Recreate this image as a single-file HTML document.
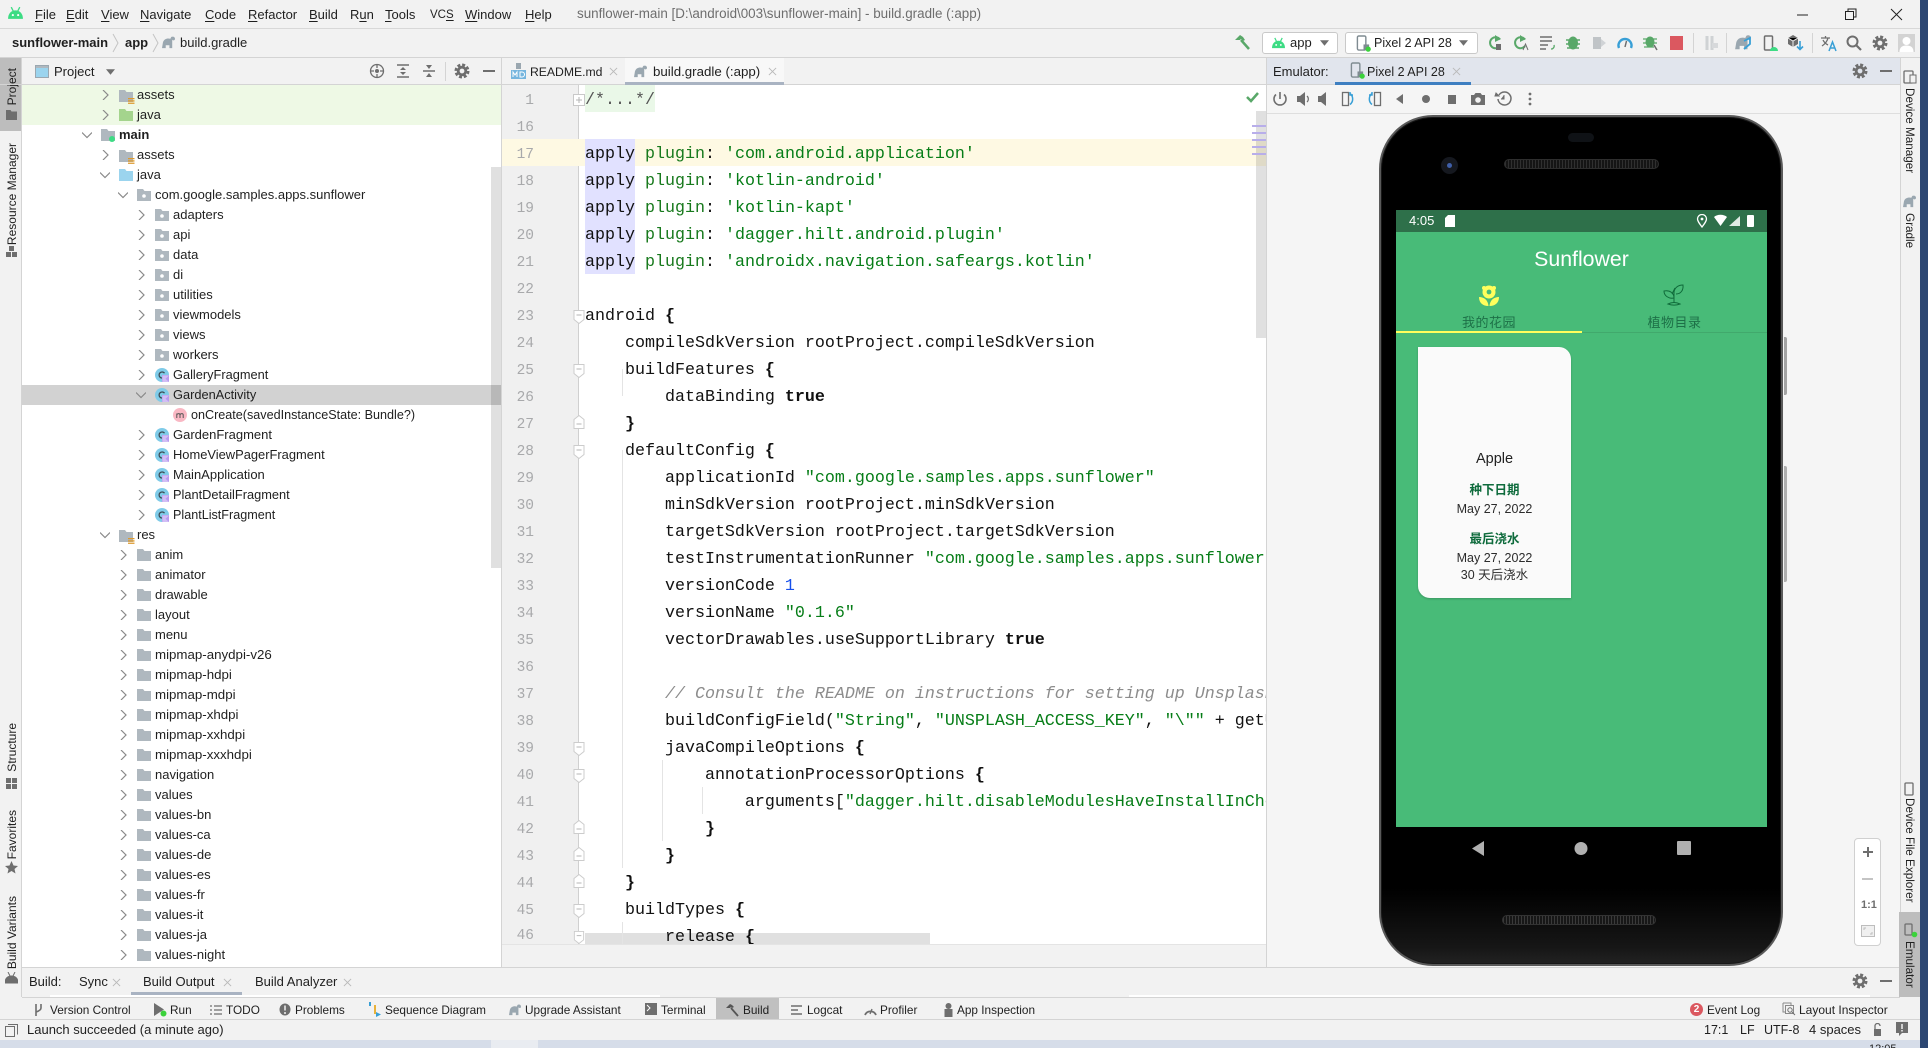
<!DOCTYPE html>
<html><head><meta charset="utf-8"><title>sunflower-main - build.gradle</title>
<style>
html,body{margin:0;padding:0;width:1928px;height:1048px;overflow:hidden;background:#f2f2f2}
body{position:relative;font-family:"Liberation Sans","Noto Sans CJK SC",sans-serif;font-size:13px;color:#1f1f1f}
div,svg,u{box-sizing:border-box}
.a,.t,svg.i{position:absolute}
.t{white-space:nowrap;line-height:20px;height:20px}
.b{font-weight:bold}
.g{color:#8a8a8a}
.bb{font-size:11.8px}
.mm{font-size:13.3px}
.vl,.vr{position:absolute;white-space:nowrap;line-height:18px;width:18px;writing-mode:vertical-rl}
.vl{left:3px;font-size:12px;transform:rotate(180deg)}
.vr{left:1900px;font-size:11.7px}
u{text-decoration:underline;text-underline-offset:2px}
#tree .t{color:#1f1f1f}
.c{position:absolute;left:585px;margin-top:2px;white-space:pre;font-family:"Liberation Mono",monospace;font-size:16.67px;line-height:27px;height:27px;color:#111}
.n{position:absolute;width:40px;left:494px;margin-top:3px;text-align:right;font-family:"Liberation Mono",monospace;font-size:14.5px;line-height:27px;height:27px;color:#a8a9ab}
.s{color:#067d17}.p{color:#17791c}
.ph{position:absolute;font-family:"Liberation Sans","Noto Sans CJK SC",sans-serif;text-align:center;white-space:nowrap}
.ig{position:absolute;width:1px;background:#e4e4e4}
</style></head><body>
<svg width="0" height="0" style="position:absolute"><defs>
<symbol id="f" viewBox="0 0 14 12"><path d="M0 0h6l1.5 2H14v10H0z" fill="#afb8bf"/></symbol>
<symbol id="pk" viewBox="0 0 14 12"><path d="M0 0h6l1.5 2H14v10H0z" fill="#afb8bf"/><circle cx="7" cy="7" r="1.8" fill="#fff"/></symbol>
<symbol id="jv" viewBox="0 0 14 12"><path d="M0 0h6l1.5 2H14v10H0z" fill="#9bd4ee"/></symbol>
<symbol id="jg" viewBox="0 0 14 12"><path d="M0 0h6l1.5 2H14v10H0z" fill="#a4d48d"/></symbol>
<symbol id="rs" viewBox="0 0 16 16"><path d="M0 1h6l1.500 2H14v10H0z" fill="#afb8bf"/><path d="M9 9h6.500v1.300H9zM9 11.300h6.500v1.300H9zM9 13.600h6.500v1.300H9z" fill="#dd9a2e"/><rect x="8" y="7.500" width="8" height="8.500" fill="none"/></symbol>
<symbol id="cl" viewBox="0 0 14 14"><circle cx="7" cy="7" r="7" fill="#7fcbe8"/><path d="M9.500 5.200A3 3 0 1 0 9.500 8.800" fill="none" stroke="#3d4a52" stroke-width="1.300"/><path d="M7 7h7v7H7z" fill="#b99bf0"/><path d="M7.500 14V7.500H14L10.500 10.700 14 14z" fill="#fff" opacity=".35"/></symbol>
<symbol id="cr" viewBox="0 0 10 10"><path d="M3 0l5 5-5 5" fill="none" stroke="#8a8a8a" stroke-width="1.200"/></symbol>
<symbol id="cd" viewBox="0 0 10 10"><path d="M0 2.500l5 5 5-5" fill="none" stroke="#8a8a8a" stroke-width="1.200"/></symbol>
<symbol id="gr" viewBox="0 0 16 16"><circle cx="8" cy="8" r="3.800" fill="none" stroke="#6e6e6e" stroke-width="2.800"/><circle cx="8" cy="8" r="6.200" fill="none" stroke="#6e6e6e" stroke-width="2.600" stroke-dasharray="3 1.860"/></symbol>
<symbol id="ele" viewBox="0 0 16 14"><path d="M1 13l1-6C3 3 7 2 10 3l1-2c2-1 4 0 4 2s-2 2-3 1v9h-3v-3H5v3H2z" fill="#9aa7b0"/></symbol>
<symbol id="and" viewBox="0 0 16 14"><path d="M1 12C1 7 4 4 8 4s7 3 7 8z" fill="#3ddc84"/><path d="M4 1l2 4M12 1l-2 4" stroke="#3ddc84" stroke-width="1.300"/><circle cx="5.500" cy="8.500" r="1" fill="#fff"/><circle cx="10.500" cy="8.500" r="1" fill="#fff"/></symbol>
<symbol id="ph" viewBox="0 0 16 18"><rect x="1.500" y="1" width="9" height="15" rx="1.500" fill="none" stroke="#7f8b91" stroke-width="1.500"/><rect x="8" y="10" width="6" height="6" fill="#7f8b91"/><circle cx="13" cy="15" r="2.800" fill="#3bd23b"/></symbol>
<symbol id="x" viewBox="0 0 10 10"><path d="M1 1l8 8M9 1l-8 8" stroke="#b9b9b9" stroke-width="1"/></symbol>
<symbol id="tri" viewBox="0 0 10 6"><path d="M0 0h10L5 6z" fill="#6e6e6e"/></symbol>
<symbol id="pm" viewBox="0 0 12 12"><rect x=".5" y=".5" width="11" height="11" fill="#fff" stroke="#c9c9c9"/><path d="M3 6h6" stroke="#b5b5b5"/></symbol>
<symbol id="fe" viewBox="0 0 12 14"><path d="M1 .5h10v9L6 13.500 1 9.500z" fill="#fff" stroke="#cccccc"/><path d="M3.500 5h5" stroke="#b5b5b5"/></symbol>
<symbol id="fs" viewBox="0 0 12 14"><path d="M1 13.500h10v-9L6 .5 1 4.500z" fill="#fff" stroke="#cccccc"/><path d="M3.500 9h5" stroke="#b5b5b5"/></symbol>
</defs></svg>

<!-- desktop strips -->
<div class="a" style="left:1920px;top:0;width:8px;height:1048px;background:#2c4672"></div>
<div class="a" style="left:0;top:1040px;width:1920px;height:8px;background:#d6dde9"></div>
<div class="a" style="left:491px;top:1040px;width:47px;height:8px;background:#e9ecf1"></div>
<div class="a" style="left:1869px;top:1044px;height:4px;width:34px;overflow:hidden;font-size:11px;line-height:11px;color:#222">12:05</div>

<!-- title bar -->
<svg class="i" style="left:7px;top:6px" width="17" height="15"><use href="#and"/></svg>
<div class="t" style="left:35px;top:5px"><u>F</u>ile</div>
<div class="t" style="left:66px;top:5px"><u>E</u>dit</div>
<div class="t" style="left:101px;top:5px"><u>V</u>iew</div>
<div class="t" style="left:140px;top:5px"><u>N</u>avigate</div>
<div class="t" style="left:205px;top:5px"><u>C</u>ode</div>
<div class="t" style="left:248px;top:5px"><u>R</u>efactor</div>
<div class="t" style="left:309px;top:5px"><u>B</u>uild</div>
<div class="t" style="left:350px;top:5px">R<u>u</u>n</div>
<div class="t" style="left:385px;top:5px"><u>T</u>ools</div>
<div class="t" style="left:430px;top:5px;font-size:11.5px">VC<u>S</u></div>
<div class="t" style="left:465px;top:5px"><u>W</u>indow</div>
<div class="t" style="left:525px;top:5px"><u>H</u>elp</div>
<div class="t" style="left:577px;top:4px;color:#6e6e6e;font-size:13.4px">sunflower-main [D:\android\003\sunflower-main] - build.gradle (:app)</div>
<svg class="i" style="left:1797px;top:8px" width="124" height="14"><path d="M0 7h11" stroke="#222" stroke-width="1"/><path d="M48.500 3.500h8v8h-8zM51 3.500V1h8v8h-2.500" fill="none" stroke="#222"/><path d="M94 1l11 11M105 1L94 12" stroke="#222"/></svg>
<div class="a" style="left:0;top:28px;width:1920px;height:1px;background:#d8d8d8"></div>

<!-- breadcrumb + toolbar -->
<div class="t b" style="left:12px;top:33px">sunflower-main</div>
<svg class="i" style="left:112px;top:33px" width="7" height="20"><path d="M1 1l5 9-5 9" fill="none" stroke="#c4c4c4"/></svg>
<div class="t b" style="left:125px;top:33px">app</div>
<svg class="i" style="left:152px;top:33px" width="7" height="20"><path d="M1 1l5 9-5 9" fill="none" stroke="#c4c4c4"/></svg>
<svg class="i" style="left:161px;top:36px" width="15" height="13"><use href="#ele"/></svg>
<div class="t" style="left:180px;top:33px">build.gradle</div>

<svg class="i" style="left:1234px;top:34px" width="17" height="17"><path d="M1 6l5-5 3 2 2 3-2 1-2-2-1 1z" fill="#59a869"/><path d="M7 6l8 9" stroke="#59a869" stroke-width="2.500"/></svg>
<div class="a" style="left:1262px;top:32px;width:76px;height:22px;background:#fff;border:1px solid #c9c9c9;border-radius:3px"></div>
<svg class="i" style="left:1271px;top:37px" width="15" height="13"><use href="#and"/></svg>
<div class="t" style="left:1290px;top:33px">app</div>
<svg class="i" style="left:1320px;top:40px" width="9" height="6"><use href="#tri"/></svg>
<div class="a" style="left:1345px;top:32px;width:133px;height:22px;background:#fff;border:1px solid #c9c9c9;border-radius:3px"></div>
<svg class="i" style="left:1356px;top:35px" width="15" height="17"><use href="#ph"/></svg>
<div class="t" style="left:1374px;top:33px;font-size:12.5px">Pixel 2 API 28</div>
<svg class="i" style="left:1459px;top:40px" width="9" height="6"><use href="#tri"/></svg>
<svg class="i" style="left:1487px;top:35px" width="200" height="16">
<path d="M13 4.500A5.500 5.500 0 1 0 13 11" fill="none" stroke="#59a869" stroke-width="2"/><path d="M8 0l6 4-6 3z" fill="#59a869"/><rect x="9" y="9" width="5" height="6" fill="#6e6e6e"/>
<path d="M38 4.500A5.500 5.500 0 1 0 38 11" fill="none" stroke="#59a869" stroke-width="2"/><path d="M33 0l6 4-6 3z" fill="#59a869"/><path d="M36 15l2.500-6 2.500 6" fill="none" stroke="#6e6e6e"/>
<path d="M53 2h12M53 6h12M53 10h8M53 14h6" stroke="#6e6e6e" stroke-width="1.600"/><path d="M67 10a3 3 0 0 1-3 4" fill="none" stroke="#59a869" stroke-width="1.300"/>
<ellipse cx="86" cy="8" rx="5" ry="6.500" fill="#59a869"/><path d="M79 5l14 0M79 9h14M80 13h12" stroke="#59a869" stroke-width="1.400"/>
<rect x="106" y="2" width="8" height="12" fill="#c0c4c7"/><path d="M114 4l5 4-5 4z" fill="#d0d3d6"/>
<path d="M132 13a6.500 6.500 0 1 1 12 0" fill="none" stroke="#389fd6" stroke-width="2.400"/><path d="M138 12l1.500-6" stroke="#6e6e6e" stroke-width="1.500"/>
<ellipse cx="163" cy="7" rx="4.500" ry="5.500" fill="#59a869"/><path d="M156 4h14M156 8h14M157 12h10" stroke="#59a869" stroke-width="1.300"/><path d="M167 10l3 5" stroke="#6e6e6e" stroke-width="1.500"/>
<rect x="183" y="1" width="13" height="14" fill="#db5860"/></svg>
<div class="a" style="left:1693px;top:33px;width:1px;height:20px;background:#d4d4d4"></div>
<svg class="i" style="left:1704px;top:35px" width="16" height="16"><path d="M3 1v14M8 1v14" stroke="#cfd2d4" stroke-width="3"/><path d="M8 8h6v5H8z" fill="#d7d9db"/></svg>
<div class="a" style="left:1726px;top:33px;width:1px;height:20px;background:#d4d4d4"></div>
<svg class="i" style="left:1734px;top:34px" width="18" height="17"><use href="#ele" /><path d="M10 7l6-3v6l-6 5" fill="none" stroke="#389fd6" stroke-width="1.800"/></svg>
<svg class="i" style="left:1763px;top:35px" width="16" height="17"><rect x="1.500" y="1" width="8" height="14" rx="1" fill="none" stroke="#6e6e6e" stroke-width="1.500"/><path d="M7 16a4 4 0 0 1 8 0z" fill="#3ddc84"/></svg>
<svg class="i" style="left:1787px;top:34px" width="17" height="18"><path d="M1 4l5-3 5 3v6l-5 3-5-3z" fill="#6e6e6e"/><path d="M6 7v6M1 4l5 3 5-3" stroke="#f2f2f2"/><path d="M13 7v8M10 12.500l3 3 3-3" fill="none" stroke="#389fd6" stroke-width="1.600"/></svg>
<div class="a" style="left:1812px;top:33px;width:1px;height:20px;background:#d4d4d4"></div>
<svg class="i" style="left:1820px;top:34px" width="17" height="18"><path d="M1 4h9M5.500 2v2M8 4c-1 4-3 6-6 8M3 6c1 2 3 4 5 5" fill="none" stroke="#6e6e6e" stroke-width="1.300"/><path d="M9 17l3.500-9 3.500 9M10.500 14h4" fill="none" stroke="#389fd6" stroke-width="1.500"/></svg>
<svg class="i" style="left:1846px;top:35px" width="16" height="16"><circle cx="6.500" cy="6.500" r="5" fill="none" stroke="#6e6e6e" stroke-width="2"/><path d="M10 10l5 5" stroke="#6e6e6e" stroke-width="2.200"/></svg>
<svg class="i" style="left:1872px;top:35px" width="16" height="16"><use href="#gr"/></svg>
<svg class="i" style="left:1898px;top:34px" width="17" height="18"><rect width="17" height="18" fill="#d3d3d3"/><circle cx="8.500" cy="7" r="4" fill="#fff"/><path d="M1.500 18c0-5 3-6.500 7-6.500s7 1.500 7 6.500z" fill="#fff"/></svg>
<div class="a" style="left:0;top:57px;width:1920px;height:1px;background:#d4d4d4"></div>

<!-- left strip -->
<div class="a" style="left:0;top:58px;width:21px;height:73px;background:#bdbdbd"></div>
<div class="a" style="left:21px;top:58px;width:1px;height:939px;background:#d4d4d4"></div>
<div class="vl" style="top:68px">Project</div>
<svg class="i" style="left:6px;top:110px" width="11" height="10"><path d="M0 0h4.500l1 1.500H11V10H0z" fill="#6e6e6e"/></svg>
<div class="vl" style="top:143px">Resource Manager</div>
<svg class="i" style="left:6px;top:246px" width="11" height="11"><path d="M3 0h5v5H3zM0 6h5v5H0zM6 6h5v5H6z" fill="#6e6e6e"/></svg>
<div class="vl" style="top:723px">Structure</div>
<svg class="i" style="left:6px;top:778px" width="11" height="11"><path d="M0 0h5v5H0zM6 0h5v5H6zM6 6h5v5H6zM0 6h5v5H0z" fill="#6e6e6e"/></svg>
<div class="vl" style="top:810px">Favorites</div>
<svg class="i" style="left:5px;top:861px" width="13" height="13"><path d="M6.500 0l2 4.500 4.500.5-3.500 3 1 4.500-4-2.500-4 2.500 1-4.500L0 5l4.500-.5z" fill="#6e6e6e"/></svg>
<div class="vl" style="top:896px">Build Variants</div>
<svg class="i" style="left:5px;top:972px" width="13" height="12"><path d="M0 11C0 6 3 4 6.500 4S13 6 13 11zM3 0l2 4M10 0L8 4" fill="#6e6e6e" stroke="#6e6e6e"/></svg>

<!-- project header -->
<svg class="i" style="left:35px;top:65px" width="14" height="13"><rect x=".5" y=".5" width="13" height="12" fill="#9bd4ee" stroke="#9aa7b0"/><rect x="1" y="1" width="12" height="2" fill="#afb8bf"/></svg>
<div class="t" style="left:54px;top:62px">Project</div>
<svg class="i" style="left:106px;top:69px" width="9" height="6"><use href="#tri"/></svg>
<svg class="i" style="left:369px;top:63px" width="16" height="16"><circle cx="8" cy="8" r="6.500" fill="none" stroke="#6e6e6e" stroke-width="1.300"/><circle cx="8" cy="8" r="2" fill="#6e6e6e"/><path d="M8 1v4M8 11v4M1 8h4M11 8h4" stroke="#6e6e6e" stroke-width="1.300"/></svg>
<svg class="i" style="left:396px;top:64px" width="14" height="14"><path d="M1 1h12M1 13h12" stroke="#6e6e6e" stroke-width="1.500"/><path d="M7 3l3 3H4zM7 11L4 8h6z" fill="#6e6e6e"/></svg>
<svg class="i" style="left:422px;top:64px" width="14" height="14"><path d="M1 7h12" stroke="#6e6e6e" stroke-width="1.500"/><path d="M7 5L4 1h6zM7 9l3 4H4z" fill="#6e6e6e"/></svg>
<div class="a" style="left:445px;top:62px;width:1px;height:19px;background:#d4d4d4"></div>
<svg class="i" style="left:454px;top:63px" width="16" height="16"><use href="#gr"/></svg>
<div class="a" style="left:483px;top:70px;width:12px;height:2px;background:#6e6e6e"></div>
<div class="a" style="left:0;top:84px;width:1900px;height:1px;background:#d4d4d4"></div>

<!-- tree -->
<div class="a" style="left:22px;top:85px;width:479px;height:882px;background:#fff"></div>
<div class="a" style="left:22px;top:85px;width:479px;height:40px;background:#eef9e5"></div>
<div class="a" style="left:22px;top:385px;width:479px;height:20px;background:#d2d2d2"></div>
<div class="a" style="left:491px;top:167px;width:10px;height:401px;background:#000;opacity:.12"></div>
<div id="tree">
<svg class="i" style="left:100px;top:90px" width="10" height="10"><use href="#cr"/></svg><svg class="i" style="left:119px;top:89px" width="16" height="16"><use href="#rs"/></svg><div class="t" style="left:137px;top:85px">assets</div>
<svg class="i" style="left:100px;top:110px" width="10" height="10"><use href="#cr"/></svg><svg class="i" style="left:119px;top:109px" width="14" height="12"><use href="#jg"/></svg><div class="t" style="left:137px;top:105px">java</div>
<svg class="i" style="left:82px;top:130px" width="10" height="10"><use href="#cd"/></svg><svg class="i" style="left:101px;top:129px" width="14" height="12"><use href="#f"/></svg><div class="a" style="left:109px;top:136px;width:6px;height:6px;border-radius:50%;background:#3ddc84"></div><div class="t b" style="left:119px;top:125px">main</div>
<svg class="i" style="left:100px;top:150px" width="10" height="10"><use href="#cr"/></svg><svg class="i" style="left:119px;top:149px" width="16" height="16"><use href="#rs"/></svg><div class="t" style="left:137px;top:145px">assets</div>
<svg class="i" style="left:100px;top:170px" width="10" height="10"><use href="#cd"/></svg><svg class="i" style="left:119px;top:169px" width="14" height="12"><use href="#jv"/></svg><div class="t" style="left:137px;top:165px">java</div>
<svg class="i" style="left:118px;top:190px" width="10" height="10"><use href="#cd"/></svg><svg class="i" style="left:137px;top:189px" width="14" height="12"><use href="#pk"/></svg><div class="t" style="left:155px;top:185px">com.google.samples.apps.sunflower</div>
<svg class="i" style="left:136px;top:210px" width="10" height="10"><use href="#cr"/></svg><svg class="i" style="left:155px;top:209px" width="14" height="12"><use href="#pk"/></svg><div class="t" style="left:173px;top:205px">adapters</div>
<svg class="i" style="left:136px;top:230px" width="10" height="10"><use href="#cr"/></svg><svg class="i" style="left:155px;top:229px" width="14" height="12"><use href="#pk"/></svg><div class="t" style="left:173px;top:225px">api</div>
<svg class="i" style="left:136px;top:250px" width="10" height="10"><use href="#cr"/></svg><svg class="i" style="left:155px;top:249px" width="14" height="12"><use href="#pk"/></svg><div class="t" style="left:173px;top:245px">data</div>
<svg class="i" style="left:136px;top:270px" width="10" height="10"><use href="#cr"/></svg><svg class="i" style="left:155px;top:269px" width="14" height="12"><use href="#pk"/></svg><div class="t" style="left:173px;top:265px">di</div>
<svg class="i" style="left:136px;top:290px" width="10" height="10"><use href="#cr"/></svg><svg class="i" style="left:155px;top:289px" width="14" height="12"><use href="#pk"/></svg><div class="t" style="left:173px;top:285px">utilities</div>
<svg class="i" style="left:136px;top:310px" width="10" height="10"><use href="#cr"/></svg><svg class="i" style="left:155px;top:309px" width="14" height="12"><use href="#pk"/></svg><div class="t" style="left:173px;top:305px">viewmodels</div>
<svg class="i" style="left:136px;top:330px" width="10" height="10"><use href="#cr"/></svg><svg class="i" style="left:155px;top:329px" width="14" height="12"><use href="#pk"/></svg><div class="t" style="left:173px;top:325px">views</div>
<svg class="i" style="left:136px;top:350px" width="10" height="10"><use href="#cr"/></svg><svg class="i" style="left:155px;top:349px" width="14" height="12"><use href="#pk"/></svg><div class="t" style="left:173px;top:345px">workers</div>
<svg class="i" style="left:136px;top:370px" width="10" height="10"><use href="#cr"/></svg><svg class="i" style="left:155px;top:368px" width="14" height="14"><use href="#cl"/></svg><div class="t" style="left:173px;top:365px;font-size:12.8px">GalleryFragment</div>
<svg class="i" style="left:136px;top:390px" width="10" height="10"><use href="#cd"/></svg><svg class="i" style="left:155px;top:388px" width="14" height="14"><use href="#cl"/></svg><div class="t" style="left:173px;top:385px;font-size:12.8px">GardenActivity</div>
<svg class="i" style="left:173px;top:408px" width="14" height="14"><circle cx="7" cy="7" r="7" fill="#f9b8c4"/><path d="M3.800 10V5.500M3.800 6.500c1.500-1.500 3.200-1 3.200.5v3M7 6.500c1.500-1.500 3.200-1 3.200.5v3" fill="none" stroke="#555" stroke-width="1"/></svg><div class="t" style="left:191px;top:405px;font-size:12.6px">onCreate(savedInstanceState: Bundle?)</div>
<svg class="i" style="left:136px;top:430px" width="10" height="10"><use href="#cr"/></svg><svg class="i" style="left:155px;top:428px" width="14" height="14"><use href="#cl"/></svg><div class="t" style="left:173px;top:425px">GardenFragment</div>
<svg class="i" style="left:136px;top:450px" width="10" height="10"><use href="#cr"/></svg><svg class="i" style="left:155px;top:448px" width="14" height="14"><use href="#cl"/></svg><div class="t" style="left:173px;top:445px;font-size:12.9px">HomeViewPagerFragment</div>
<svg class="i" style="left:136px;top:470px" width="10" height="10"><use href="#cr"/></svg><svg class="i" style="left:155px;top:468px" width="14" height="14"><use href="#cl"/></svg><div class="t" style="left:173px;top:465px">MainApplication</div>
<svg class="i" style="left:136px;top:490px" width="10" height="10"><use href="#cr"/></svg><svg class="i" style="left:155px;top:488px" width="14" height="14"><use href="#cl"/></svg><div class="t" style="left:173px;top:485px;font-size:12.8px">PlantDetailFragment</div>
<svg class="i" style="left:136px;top:510px" width="10" height="10"><use href="#cr"/></svg><svg class="i" style="left:155px;top:508px" width="14" height="14"><use href="#cl"/></svg><div class="t" style="left:173px;top:505px;font-size:12.6px">PlantListFragment</div>
<svg class="i" style="left:100px;top:530px" width="10" height="10"><use href="#cd"/></svg><svg class="i" style="left:119px;top:529px" width="16" height="16"><use href="#rs"/></svg><div class="t" style="left:137px;top:525px">res</div>
<svg class="i" style="left:118px;top:550px" width="10" height="10"><use href="#cr"/></svg><svg class="i" style="left:137px;top:549px" width="14" height="12"><use href="#f"/></svg><div class="t" style="left:155px;top:545px">anim</div>
<svg class="i" style="left:118px;top:570px" width="10" height="10"><use href="#cr"/></svg><svg class="i" style="left:137px;top:569px" width="14" height="12"><use href="#f"/></svg><div class="t" style="left:155px;top:565px">animator</div>
<svg class="i" style="left:118px;top:590px" width="10" height="10"><use href="#cr"/></svg><svg class="i" style="left:137px;top:589px" width="14" height="12"><use href="#f"/></svg><div class="t" style="left:155px;top:585px">drawable</div>
<svg class="i" style="left:118px;top:610px" width="10" height="10"><use href="#cr"/></svg><svg class="i" style="left:137px;top:609px" width="14" height="12"><use href="#f"/></svg><div class="t" style="left:155px;top:605px">layout</div>
<svg class="i" style="left:118px;top:630px" width="10" height="10"><use href="#cr"/></svg><svg class="i" style="left:137px;top:629px" width="14" height="12"><use href="#f"/></svg><div class="t" style="left:155px;top:625px">menu</div>
<svg class="i" style="left:118px;top:650px" width="10" height="10"><use href="#cr"/></svg><svg class="i" style="left:137px;top:649px" width="14" height="12"><use href="#f"/></svg><div class="t mm" style="left:155px;top:645px">mipmap-anydpi-v26</div>
<svg class="i" style="left:118px;top:670px" width="10" height="10"><use href="#cr"/></svg><svg class="i" style="left:137px;top:669px" width="14" height="12"><use href="#f"/></svg><div class="t mm" style="left:155px;top:665px">mipmap-hdpi</div>
<svg class="i" style="left:118px;top:690px" width="10" height="10"><use href="#cr"/></svg><svg class="i" style="left:137px;top:689px" width="14" height="12"><use href="#f"/></svg><div class="t mm" style="left:155px;top:685px">mipmap-mdpi</div>
<svg class="i" style="left:118px;top:710px" width="10" height="10"><use href="#cr"/></svg><svg class="i" style="left:137px;top:709px" width="14" height="12"><use href="#f"/></svg><div class="t mm" style="left:155px;top:705px">mipmap-xhdpi</div>
<svg class="i" style="left:118px;top:730px" width="10" height="10"><use href="#cr"/></svg><svg class="i" style="left:137px;top:729px" width="14" height="12"><use href="#f"/></svg><div class="t mm" style="left:155px;top:725px">mipmap-xxhdpi</div>
<svg class="i" style="left:118px;top:750px" width="10" height="10"><use href="#cr"/></svg><svg class="i" style="left:137px;top:749px" width="14" height="12"><use href="#f"/></svg><div class="t mm" style="left:155px;top:745px">mipmap-xxxhdpi</div>
<svg class="i" style="left:118px;top:770px" width="10" height="10"><use href="#cr"/></svg><svg class="i" style="left:137px;top:769px" width="14" height="12"><use href="#f"/></svg><div class="t" style="left:155px;top:765px">navigation</div>
<svg class="i" style="left:118px;top:790px" width="10" height="10"><use href="#cr"/></svg><svg class="i" style="left:137px;top:789px" width="14" height="12"><use href="#f"/></svg><div class="t" style="left:155px;top:785px">values</div>
<svg class="i" style="left:118px;top:810px" width="10" height="10"><use href="#cr"/></svg><svg class="i" style="left:137px;top:809px" width="14" height="12"><use href="#f"/></svg><div class="t" style="left:155px;top:805px">values-bn</div>
<svg class="i" style="left:118px;top:830px" width="10" height="10"><use href="#cr"/></svg><svg class="i" style="left:137px;top:829px" width="14" height="12"><use href="#f"/></svg><div class="t" style="left:155px;top:825px">values-ca</div>
<svg class="i" style="left:118px;top:850px" width="10" height="10"><use href="#cr"/></svg><svg class="i" style="left:137px;top:849px" width="14" height="12"><use href="#f"/></svg><div class="t" style="left:155px;top:845px">values-de</div>
<svg class="i" style="left:118px;top:870px" width="10" height="10"><use href="#cr"/></svg><svg class="i" style="left:137px;top:869px" width="14" height="12"><use href="#f"/></svg><div class="t" style="left:155px;top:865px">values-es</div>
<svg class="i" style="left:118px;top:890px" width="10" height="10"><use href="#cr"/></svg><svg class="i" style="left:137px;top:889px" width="14" height="12"><use href="#f"/></svg><div class="t" style="left:155px;top:885px">values-fr</div>
<svg class="i" style="left:118px;top:910px" width="10" height="10"><use href="#cr"/></svg><svg class="i" style="left:137px;top:909px" width="14" height="12"><use href="#f"/></svg><div class="t" style="left:155px;top:905px">values-it</div>
<svg class="i" style="left:118px;top:930px" width="10" height="10"><use href="#cr"/></svg><svg class="i" style="left:137px;top:929px" width="14" height="12"><use href="#f"/></svg><div class="t" style="left:155px;top:925px">values-ja</div>
<svg class="i" style="left:118px;top:950px" width="10" height="10"><use href="#cr"/></svg><svg class="i" style="left:137px;top:949px" width="14" height="12"><use href="#f"/></svg><div class="t" style="left:155px;top:945px">values-night</div>
</div>
<div class="a" style="left:501px;top:58px;width:1px;height:909px;background:#d4d4d4"></div>

<!-- editor tabs -->
<svg class="i" style="left:511px;top:62px" width="15" height="17"><path d="M5 1h5v6H5z" fill="#9aa7b0"/><rect x="0" y="8" width="15" height="9" fill="#75b5de"/><path d="M2 15v-5l2 3 2-3v5M9 10v5h2a2.500 2.500 0 0 0 0-5z" fill="none" stroke="#fff"/></svg>
<div class="t" style="left:530px;top:62px;font-size:12.2px">README.md</div>
<svg class="i" style="left:609px;top:67px" width="9" height="9"><use href="#x"/></svg>
<div class="a" style="left:625px;top:58px;width:159px;height:26px;background:#f8f8f8"></div>
<div class="a" style="left:625px;top:82px;width:159px;height:3px;background:#a9b3c2"></div>
<svg class="i" style="left:633px;top:65px" width="15" height="13"><use href="#ele"/></svg>
<div class="t" style="left:653px;top:62px;font-size:13.3px">build.gradle (:app)</div>
<svg class="i" style="left:768px;top:67px" width="9" height="9"><use href="#x"/></svg>

<!-- editor -->
<div class="a" style="left:502px;top:85px;width:764px;height:859px;background:#fff"></div>
<div class="a" style="left:502px;top:85px;width:77px;height:859px;background:#f0f0f0;border-right:1px solid #d0d0d0"></div>
<div class="a" style="left:502px;top:139px;width:764px;height:27px;background:#fef9e3"></div>
<div class="a" style="left:585px;top:85px;width:70px;height:27px;background:#eaf8e8"></div>
<div class="a" style="left:585px;top:139px;width:50px;height:135px;background:#e1e1ff"></div>
<div class="a" style="left:585px;top:933px;width:345px;height:11px;background:#e0e0e0"></div>
<div class="ig" style="left:622px;top:369px;height:27px"></div>
<div class="ig" style="left:622px;top:450px;height:418px"></div>
<div class="ig" style="left:622px;top:922px;height:22px"></div>
<div class="ig" style="left:662px;top:760px;height:81px"></div>
<div class="ig" style="left:702px;top:787px;height:27px"></div>
<div class="n" style="top:85px">1</div><div class="n" style="top:112px">16</div><div class="n" style="top:139px">17</div><div class="n" style="top:166px">18</div><div class="n" style="top:193px">19</div><div class="n" style="top:220px">20</div><div class="n" style="top:247px">21</div><div class="n" style="top:274px">22</div><div class="n" style="top:301px">23</div><div class="n" style="top:328px">24</div><div class="n" style="top:355px">25</div><div class="n" style="top:382px">26</div><div class="n" style="top:409px">27</div><div class="n" style="top:436px">28</div><div class="n" style="top:463px">29</div><div class="n" style="top:490px">30</div><div class="n" style="top:517px">31</div><div class="n" style="top:544px">32</div><div class="n" style="top:571px">33</div><div class="n" style="top:598px">34</div><div class="n" style="top:625px">35</div><div class="n" style="top:652px">36</div><div class="n" style="top:679px">37</div><div class="n" style="top:706px">38</div><div class="n" style="top:733px">39</div><div class="n" style="top:760px">40</div><div class="n" style="top:787px">41</div><div class="n" style="top:814px">42</div><div class="n" style="top:841px">43</div><div class="n" style="top:868px">44</div><div class="n" style="top:895px">45</div><div class="a" style="left:494px;top:922px;width:40px;height:22px;overflow:hidden"><div class="n" style="left:0;top:0;margin-top:1px">46</div></div>
<svg class="i" style="left:573px;top:94px" width="12" height="12"><use href="#pm"/></svg>
<svg class="i" style="left:573px;top:94px" width="12" height="12"><path d="M6 3v6" stroke="#b5b5b5"/></svg>
<svg class="i" style="left:573px;top:310px" width="12" height="14"><use href="#fe"/></svg>
<svg class="i" style="left:573px;top:364px" width="12" height="14"><use href="#fe"/></svg>
<svg class="i" style="left:573px;top:415px" width="12" height="14"><use href="#fs"/></svg>
<svg class="i" style="left:573px;top:445px" width="12" height="14"><use href="#fe"/></svg>
<svg class="i" style="left:573px;top:742px" width="12" height="14"><use href="#fe"/></svg>
<svg class="i" style="left:573px;top:769px" width="12" height="14"><use href="#fe"/></svg>
<svg class="i" style="left:573px;top:820px" width="12" height="14"><use href="#fs"/></svg>
<svg class="i" style="left:573px;top:847px" width="12" height="14"><use href="#fs"/></svg>
<svg class="i" style="left:573px;top:874px" width="12" height="14"><use href="#fs"/></svg>
<svg class="i" style="left:573px;top:904px" width="12" height="14"><use href="#fe"/></svg>
<svg class="i" style="left:573px;top:931px" width="12" height="13"><use href="#fe"/></svg>
<div class="a" style="left:585px;top:85px;width:681px;height:859px;overflow:hidden">
<div style="position:absolute;left:-585px;top:-85px;width:1266px;height:944px">
<div class="c" style="top:85px;color:#555">/*...*/</div>
<div class="c" style="top:139px">apply <span class="p">plugin</span>: <span class="s">'com.android.application'</span></div>
<div class="c" style="top:166px">apply <span class="p">plugin</span>: <span class="s">'kotlin-android'</span></div>
<div class="c" style="top:193px">apply <span class="p">plugin</span>: <span class="s">'kotlin-kapt'</span></div>
<div class="c" style="top:220px">apply <span class="p">plugin</span>: <span class="s">'dagger.hilt.android.plugin'</span></div>
<div class="c" style="top:247px">apply <span class="p">plugin</span>: <span class="s">'androidx.navigation.safeargs.kotlin'</span></div>
<div class="c" style="top:301px">android <b>{</b></div>
<div class="c" style="top:328px">    compileSdkVersion rootProject.compileSdkVersion</div>
<div class="c" style="top:355px">    buildFeatures <b>{</b></div>
<div class="c" style="top:382px">        dataBinding <b>true</b></div>
<div class="c" style="top:409px">    <b>}</b></div>
<div class="c" style="top:436px">    defaultConfig <b>{</b></div>
<div class="c" style="top:463px">        applicationId <span class="s">"com.google.samples.apps.sunflower"</span></div>
<div class="c" style="top:490px">        minSdkVersion rootProject.minSdkVersion</div>
<div class="c" style="top:517px">        targetSdkVersion rootProject.targetSdkVersion</div>
<div class="c" style="top:544px">        testInstrumentationRunner <span class="s">"com.google.samples.apps.sunflower.utilities"</span></div>
<div class="c" style="top:571px">        versionCode <span style="color:#1750eb">1</span></div>
<div class="c" style="top:598px">        versionName <span class="s">"0.1.6"</span></div>
<div class="c" style="top:625px">        vectorDrawables.useSupportLibrary <b>true</b></div>
<div class="c" style="top:679px;color:#8c8c8c;font-style:italic">        // Consult the README on instructions for setting up Unsplash API key</div>
<div class="c" style="top:706px">        buildConfigField(<span class="s">"String"</span>, <span class="s">"UNSPLASH_ACCESS_KEY"</span>, <span class="s">"\""</span> + getUnsplashAccess</div>
<div class="c" style="top:733px">        javaCompileOptions <b>{</b></div>
<div class="c" style="top:760px">            annotationProcessorOptions <b>{</b></div>
<div class="c" style="top:787px">                arguments[<span class="s">"dagger.hilt.disableModulesHaveInstallInCheck"</span>]</div>
<div class="c" style="top:814px">            <b>}</b></div>
<div class="c" style="top:841px">        <b>}</b></div>
<div class="c" style="top:868px">    <b>}</b></div>
<div class="c" style="top:895px">    buildTypes <b>{</b></div>
<div class="c" style="top:922px">        release <b>{</b></div>
</div></div>
<div class="a" style="left:1256px;top:111px;width:10px;height:227px;background:#000;opacity:.12"></div>
<div class="a" style="left:1252px;top:125px;width:14px;height:2px;background:#b8aeea"></div>
<div class="a" style="left:1252px;top:132px;width:14px;height:2px;background:#b8aeea"></div>
<div class="a" style="left:1252px;top:139px;width:14px;height:2px;background:#b8aeea"></div>
<div class="a" style="left:1252px;top:146px;width:14px;height:2px;background:#b8aeea"></div>
<div class="a" style="left:1252px;top:153px;width:14px;height:2px;background:#b8aeea"></div>
<svg class="i" style="left:1246px;top:92px" width="13" height="11"><path d="M1 5l4 4 7-8" fill="none" stroke="#59a869" stroke-width="2.500"/></svg>
<div class="a" style="left:502px;top:944px;width:764px;height:1px;background:#e4e4e4"></div>

<!-- emulator panel -->
<div class="a" style="left:1266px;top:58px;width:634px;height:26px;background:#e1e5ed"></div>
<div class="a" style="left:1266px;top:58px;width:1px;height:909px;background:#d4d4d4"></div>
<div class="t" style="left:1273px;top:62px">Emulator:</div>
<svg class="i" style="left:1350px;top:62px" width="15" height="17"><use href="#ph"/></svg>
<div class="t" style="left:1367px;top:62px;font-size:12.5px">Pixel 2 API 28</div>
<svg class="i" style="left:1452px;top:67px" width="9" height="9"><use href="#x"/></svg>
<div class="a" style="left:1335px;top:82px;width:136px;height:3px;background:#3e7fc1"></div>
<svg class="i" style="left:1852px;top:63px" width="16" height="16"><use href="#gr"/></svg>
<div class="a" style="left:1880px;top:70px;width:12px;height:2px;background:#6e6e6e"></div>
<div class="a" style="left:1267px;top:85px;width:633px;height:882px;background:#f5f5f5"></div>
<svg class="i" style="left:1272px;top:91px" width="265" height="16">
<path d="M4 3.500A6 6 0 1 0 12 3.500M8 1v7" fill="none" stroke="#6e6e6e" stroke-width="1.600"/>
<path d="M25 5h3l5-4v14l-5-4h-3z" fill="#6e6e6e"/><path d="M35 5a4 4 0 0 1 0 6" fill="none" stroke="#6e6e6e" stroke-width="1.200"/>
<path d="M46 5h3l5-4v14l-5-4h-3z" fill="#6e6e6e"/>
<rect x="70.500" y="1.500" width="6" height="13" fill="none" stroke="#6e6e6e" stroke-width="1.300"/><path d="M78 2.500a7 7 0 0 1 0 11M78 1v3h3" fill="none" stroke="#389fd6" stroke-width="1.500"/>
<path d="M100 2.500a7 7 0 0 0 0 11M100 1v3h-3" fill="none" stroke="#389fd6" stroke-width="1.500"/><rect x="102.500" y="1.500" width="6" height="13" fill="none" stroke="#6e6e6e" stroke-width="1.300"/>
<path d="M131 3v10l-7-5z" fill="#6e6e6e"/><circle cx="154" cy="8" r="4" fill="#6e6e6e"/><rect x="176" y="4" width="8" height="9" fill="#6e6e6e"/>
<path d="M199 4h3l1.500-2h5L210 4h3v10h-14z" fill="#6e6e6e"/><circle cx="206" cy="9" r="2.800" fill="#f2f2f2"/>
<path d="M227 4a6.500 6.500 0 1 1-1 4" fill="none" stroke="#6e6e6e" stroke-width="1.500"/><path d="M224 2l3 3h-4zM232 4v4h-3" fill="#6e6e6e" stroke="#6e6e6e"/>
<circle cx="258" cy="3" r="1.400" fill="#6e6e6e"/><circle cx="258" cy="8" r="1.400" fill="#6e6e6e"/><circle cx="258" cy="13" r="1.400" fill="#6e6e6e"/></svg>
<div class="a" style="left:1267px;top:113px;width:633px;height:1px;background:#dedede"></div>

<!-- phone -->
<div class="a" style="left:1784px;top:337px;width:3px;height:58px;background:#a3a3a3;border-radius:0 2px 2px 0"></div>
<div class="a" style="left:1784px;top:466px;width:3px;height:116px;background:#b0b0b0;border-radius:0 2px 2px 0"></div>
<div class="a" style="left:1379px;top:115px;width:404px;height:851px;border-radius:54px;background:linear-gradient(#000 0,#000 91%,#161616 98%,#222 100%);border:2px solid #5a5a5a;box-shadow:inset 0 0 0 1px #181818"></div>
<div class="a" style="left:1568px;top:133px;width:26px;height:9px;border-radius:5px;background:#0f1216"></div>
<div class="a" style="left:1441px;top:157px;width:17px;height:17px;border-radius:50%;background:#15181f"></div>
<div class="a" style="left:1447px;top:163px;width:5px;height:5px;border-radius:50%;background:#3f5fa8"></div>
<div class="a" style="left:1504px;top:159px;width:155px;height:10px;border-radius:5px;background:repeating-linear-gradient(90deg,#303030 0,#303030 1px,#151515 1px,#151515 3px);border:1px solid #2e2e2e"></div>
<div class="a" style="left:1396px;top:210px;width:371px;height:617px;background:#48bb78"></div>
<div class="a" style="left:1396px;top:210px;width:371px;height:22px;background:#2e704a"></div>
<div class="ph" style="left:1409px;top:211px;font-size:13px;line-height:20px;color:#fff">4:05</div>
<svg class="i" style="left:1445px;top:215px" width="10" height="12"><path d="M3 0h7v12H0V3z" fill="#fff"/></svg>
<svg class="i" style="left:1696px;top:214px" width="60" height="14"><path d="M6 13C3 9 1.500 7 1.500 5a4.500 4.500 0 0 1 9 0c0 2-1.500 4-4.500 8z" fill="none" stroke="#fff" stroke-width="1.300"/><circle cx="6" cy="5" r="1.400" fill="#fff"/><path d="M18 3c3-3 10-3 13 0l-6.500 9z" fill="#fff"/><path d="M33 12l11-10v10z" fill="#fff" opacity=".85"/><rect x="51" y="1" width="7" height="12" rx="1" fill="#fff"/></svg>
<div class="ph" style="left:1396px;top:245px;width:371px;font-size:21.3px;line-height:28px;color:#fff">Sunflower</div>
<svg class="i" style="left:1479px;top:284px" width="20" height="22"><circle cx="10" cy="8" r="6.500" fill="#ffff5c"/><circle cx="10" cy="8" r="2.400" fill="#48bb78"/><circle cx="5" cy="4" r="2" fill="#ffff5c"/><circle cx="15" cy="4" r="2" fill="#ffff5c"/><path d="M0 13c5 0 9 3 9.500 9C4 22 0 19 0 13zM20 13c-5 0-9 3-9.500 9 5.500 0 9.500-3 9.500-9z" fill="#ffff5c"/></svg>
<svg class="i" style="left:1663px;top:284px" width="22" height="22"><path d="M11 19V9c0-5 4-8 9-8 .5 5-2 9-7 9M11 14c0-5-4-8-10-7 0 5 5 8 10 7M12 4l-3 6" fill="none" stroke="#0f6b3a" stroke-width="1"/><path d="M5 20c4-2 8-2 12 0-4 1.500-8 1.500-12 0z" fill="none" stroke="#0f6b3a"/></svg>
<div class="ph" style="left:1396px;top:313px;width:186px;font-size:13px;line-height:20px;color:#1d7047;letter-spacing:.5px">我的花园</div>
<div class="ph" style="left:1582px;top:313px;width:185px;font-size:13px;line-height:20px;color:#1d7047;letter-spacing:.5px">植物目录</div>
<div class="a" style="left:1582px;top:332px;width:185px;height:1px;background:#41a96c"></div>
<div class="a" style="left:1396px;top:331px;width:186px;height:2px;background:#ffff5c"></div>
<div class="a" style="left:1418px;top:347px;width:153px;height:251px;background:#fafafa;border-radius:0 12px 0 12px;box-shadow:0 1px 2px rgba(0,0,0,.2)"></div>
<div class="ph" style="left:1418px;top:449px;width:153px;font-size:14.5px;line-height:20px;color:#222">Apple</div>
<div class="ph" style="left:1418px;top:480px;width:153px;font-size:12.5px;line-height:20px;font-weight:bold;color:#0e6b3c">种下日期</div>
<div class="ph" style="left:1418px;top:499px;width:153px;font-size:12.5px;line-height:20px;color:#2c2c2c">May 27, 2022</div>
<div class="ph" style="left:1418px;top:529px;width:153px;font-size:12.5px;line-height:20px;font-weight:bold;color:#0e6b3c">最后浇水</div>
<div class="ph" style="left:1418px;top:548px;width:153px;font-size:12.5px;line-height:20px;color:#2c2c2c">May 27, 2022</div>
<div class="ph" style="left:1418px;top:565px;width:153px;font-size:12.5px;line-height:20px;color:#2c2c2c">30 天后浇水</div>
<svg class="i" style="left:1472px;top:841px" width="220" height="15"><path d="M12 0v15L0 7.500z" fill="#b0b0b0"/><circle cx="109" cy="7.500" r="6.500" fill="#b0b0b0"/><rect x="205" y="0" width="14" height="14" rx="1" fill="#b0b0b0"/></svg>
<div class="a" style="left:1502px;top:915px;width:154px;height:10px;border-radius:5px;background:repeating-linear-gradient(90deg,#3a3a3a 0,#3a3a3a 1px,#171717 1px,#171717 3px);border:1px solid #333"></div>

<!-- zoom controls -->
<div class="a" style="left:1854px;top:838px;width:27px;height:108px;background:#fff;border:1px solid #d0d0d0;border-radius:4px"></div>
<svg class="i" style="left:1862px;top:846px" width="12" height="12"><path d="M6 1v10M1 6h10" stroke="#6e6e6e" stroke-width="2"/></svg>
<div class="a" style="left:1862px;top:878px;width:11px;height:2px;background:#c4c4c4"></div>
<div class="t b" style="left:1861px;top:895px;font-size:11px;color:#6e6e6e">1:1</div>
<svg class="i" style="left:1861px;top:925px" width="14" height="12"><rect x=".5" y=".5" width="13" height="11" fill="#f0f0f0" stroke="#bdbdbd"/><path d="M3 5V3h2M11 7v2H9" fill="none" stroke="#bdbdbd"/></svg>

<!-- right strip -->
<div class="a" style="left:1900px;top:58px;width:1px;height:939px;background:#d4d4d4"></div>
<svg class="i" style="left:1903px;top:70px" width="14" height="14"><rect x="1" y="1" width="9" height="12" rx="1" fill="none" stroke="#6e6e6e" stroke-width="1.300"/><rect x="7" y="5" width="6" height="8" fill="#f2f2f2" stroke="#6e6e6e"/></svg>
<div class="vr" style="top:88px">Device Manager</div>
<svg class="i" style="left:1902px;top:195px" width="15" height="13"><use href="#ele"/></svg>
<div class="vr" style="top:213px">Gradle</div>
<svg class="i" style="left:1904px;top:782px" width="10" height="14"><rect x="1" y="1" width="8" height="12" rx="1" fill="none" stroke="#6e6e6e" stroke-width="1.300"/></svg>
<div class="vr" style="top:798px">Device File Explorer</div>
<div class="a" style="left:1899px;top:912px;width:21px;height:85px;background:#bdbdbd"></div>
<svg class="i" style="left:1904px;top:923px" width="14" height="15"><rect x="1" y="1" width="7" height="11" rx="1" fill="none" stroke="#6e6e6e" stroke-width="1.300"/><circle cx="10.500" cy="11.500" r="2.800" fill="#3bd23b"/></svg>
<div class="vr" style="top:941px">Emulator</div>

<!-- build panel -->
<div class="a" style="left:22px;top:967px;width:1877px;height:1px;background:#d4d4d4"></div>
<div class="t" style="left:29px;top:972px">Build:</div>
<div class="t" style="left:79px;top:972px">Sync</div><svg class="i" style="left:112px;top:978px" width="9" height="9"><use href="#x"/></svg>
<div class="t" style="left:143px;top:972px">Build Output</div><svg class="i" style="left:223px;top:978px" width="9" height="9"><use href="#x"/></svg>
<div class="a" style="left:131px;top:992px;width:111px;height:3px;background:#a9b3c2"></div>
<div class="t" style="left:255px;top:972px">Build Analyzer</div><svg class="i" style="left:343px;top:978px" width="9" height="9"><use href="#x"/></svg>
<svg class="i" style="left:1852px;top:973px" width="16" height="16"><use href="#gr"/></svg>
<div class="a" style="left:1880px;top:980px;width:12px;height:2px;background:#6e6e6e"></div>
<div class="a" style="left:50px;top:995px;width:610px;height:2px;background:#fff"></div>
<div class="a" style="left:1129px;top:995px;width:741px;height:2px;background:#fff"></div>
<div class="a" style="left:22px;top:997px;width:1878px;height:1px;background:#d4d4d4"></div>

<!-- tool window bar -->
<div class="a" style="left:716px;top:998px;width:63px;height:21px;background:#c0c0c0"></div>
<svg class="i" style="left:33px;top:1003px" width="11" height="14"><path d="M3 1v12M8 1v4c0 2-2 3-5 4" fill="none" stroke="#6e6e6e" stroke-width="1.600"/></svg>
<div class="t bb" style="left:50px;top:1000px">Version Control</div>
<svg class="i" style="left:154px;top:1003px" width="13" height="14"><path d="M0 0l10 6.500L0 13z" fill="#6e6e6e"/><circle cx="9.500" cy="10.500" r="3" fill="#3bd23b"/></svg>
<div class="t bb" style="left:170px;top:1000px">Run</div>
<svg class="i" style="left:210px;top:1004px" width="12" height="12"><path d="M0 2h2M4 2h8M0 6h2M4 6h8M0 10h2M4 10h8" stroke="#6e6e6e" stroke-width="1.300"/></svg>
<div class="t bb" style="left:226px;top:1000px">TODO</div>
<svg class="i" style="left:279px;top:1003px" width="12" height="13"><ellipse cx="6" cy="6.500" rx="5.500" ry="6" fill="#6e6e6e"/><path d="M6 2.500v5M6 9v2" stroke="#f2f2f2" stroke-width="1.500"/></svg>
<div class="t bb" style="left:295px;top:1000px">Problems</div>
<svg class="i" style="left:368px;top:1002px" width="14" height="16"><path d="M2 0v4" stroke="#389fd6" stroke-width="2"/><path d="M6 3h2v9H6z" fill="#e8b23a"/><path d="M8 10l5 2.500L8 15z" fill="#389fd6"/></svg>
<div class="t bb" style="left:385px;top:1000px">Sequence Diagram</div>
<svg class="i" style="left:508px;top:1004px" width="14" height="12"><use href="#ele"/></svg>
<div class="t bb" style="left:525px;top:1000px">Upgrade Assistant</div>
<svg class="i" style="left:645px;top:1003px" width="12" height="12"><rect width="12" height="12" fill="#6e6e6e"/><path d="M2 2l3 3-3 3" fill="none" stroke="#fff"/></svg>
<div class="t bb" style="left:661px;top:1000px">Terminal</div>
<svg class="i" style="left:726px;top:1003px" width="14" height="14"><path d="M0 5l4-4 2 1 2 2-2 1-1-1-1 1z" fill="#555"/><path d="M5 5l7 8" stroke="#555" stroke-width="1.800"/></svg>
<div class="t bb" style="left:743px;top:1000px">Build</div>
<svg class="i" style="left:791px;top:1004px" width="12" height="12"><path d="M0 2h11M0 6h7M0 10h11" stroke="#6e6e6e" stroke-width="1.500"/></svg>
<div class="t bb" style="left:807px;top:1000px">Logcat</div>
<svg class="i" style="left:864px;top:1004px" width="13" height="12"><path d="M1 11a6 6 0 0 1 11 0" fill="none" stroke="#6e6e6e" stroke-width="1.800"/><path d="M6 10l2-5" stroke="#6e6e6e" stroke-width="1.300"/></svg>
<div class="t bb" style="left:880px;top:1000px">Profiler</div>
<svg class="i" style="left:943px;top:1003px" width="11" height="14"><circle cx="5.500" cy="3" r="3" fill="#6e6e6e"/><rect x="1.500" y="6" width="8" height="8" fill="#6e6e6e"/></svg>
<div class="t bb" style="left:957px;top:1000px">App Inspection</div>
<div class="a" style="left:1690px;top:1003px;width:13px;height:13px;border-radius:50%;background:#db5860;color:#fff;font-size:10px;line-height:13px;text-align:center;font-weight:bold">2</div>
<div class="t bb" style="left:1707px;top:1000px">Event Log</div>
<svg class="i" style="left:1782px;top:1002px" width="14" height="14"><path d="M1 1h8v2M1 1v9h2" fill="none" stroke="#8a8a8a"/><rect x="3.500" y="3.500" width="8" height="8" fill="none" stroke="#8a8a8a"/><circle cx="8" cy="8" r="2.200" fill="none" stroke="#6e6e6e"/><path d="M10 10l3 3" stroke="#6e6e6e"/></svg>
<div class="t" style="left:1799px;top:1000px;font-size:12px">Layout Inspector</div>
<div class="a" style="left:0;top:1019px;width:1920px;height:1px;background:#d4d4d4"></div>

<!-- status bar -->
<svg class="i" style="left:5px;top:1024px" width="13" height="13"><rect x=".5" y="2.500" width="9" height="10" fill="none" stroke="#6e6e6e"/><path d="M3 .5h9.500v10" fill="none" stroke="#6e6e6e"/></svg>
<div class="t" style="left:27px;top:1020px">Launch succeeded (a minute ago)</div>
<div class="t" style="left:1704px;top:1020px;font-size:12.5px">17:1</div>
<div class="t" style="left:1740px;top:1020px;font-size:12.5px">LF</div>
<div class="t" style="left:1764px;top:1020px;font-size:12.5px">UTF-8</div>
<div class="t" style="left:1809px;top:1020px;font-size:13px">4 spaces</div>
<svg class="i" style="left:1871px;top:1023px" width="12" height="13"><path d="M4 6V3a2.500 2.500 0 0 1 5 0" fill="none" stroke="#6e6e6e" stroke-width="1.300"/><rect x="3" y="6" width="7" height="7" fill="#6e6e6e"/></svg>
<svg class="i" style="left:1896px;top:1022px" width="12" height="14"><path d="M0 0h12v11H6l-3 3v-3H0z" fill="#6e6e6e"/><path d="M6 2v5M6 8v1.500" stroke="#f2f2f2" stroke-width="1.500"/></svg>
</body></html>
